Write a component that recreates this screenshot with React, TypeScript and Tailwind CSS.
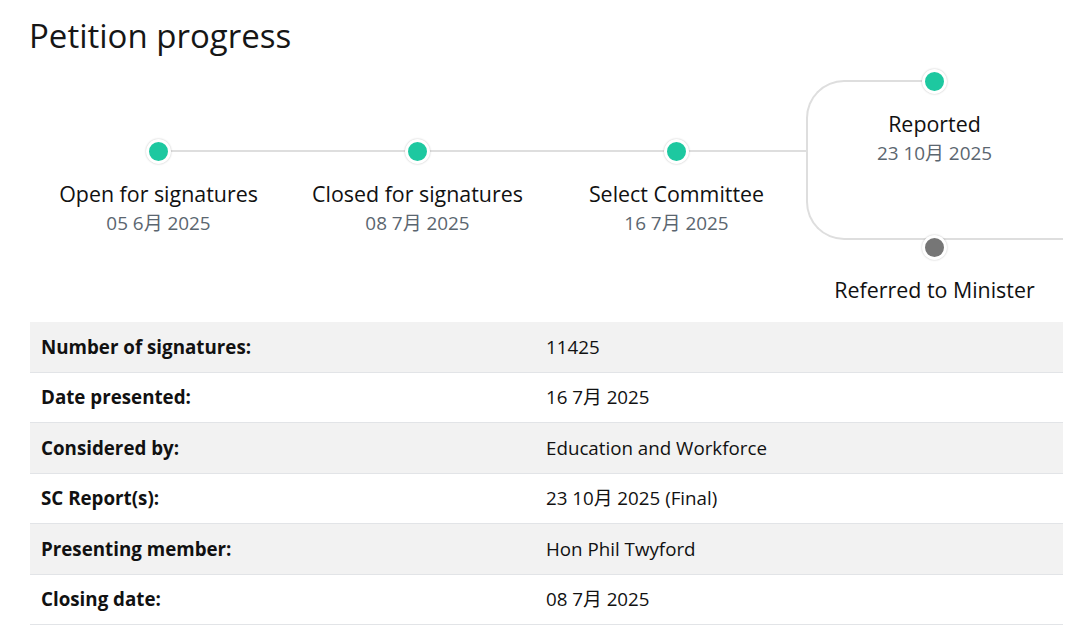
const font = { fontFamily: '"Open Sans", "Noto Sans CJK SC", sans-serif' };

type Stage = { title: string; date: string; first?: boolean };

const stages: Stage[] = [
  { title: "Open for signatures", date: "05 6月 2025", first: true },
  { title: "Closed for signatures", date: "08 7月 2025" },
  { title: "Select Committee", date: "16 7月 2025" },
];

const details: [string, string][] = [
  ["Number of signatures:", "11425"],
  ["Date presented:", "16 7月 2025"],
  ["Considered by:", "Education and Workforce"],
  ["SC Report(s):", "23 10月 2025 (Final)"],
  ["Presenting member:", "Hon Phil Twyford"],
  ["Closing date:", "08 7月 2025"],
];

function Dot({ done = true }: { done?: boolean }) {
  return (
    <span
      className={`relative z-10 block h-[25px] w-[25px] rounded-full border-[3px] border-white shadow-[0_0_2px_rgba(0,0,0,0.25)] ${
        done ? "bg-[#1dc8a0]" : "bg-[#767676]"
      }`}
    />
  );
}

function StageColumn({ stage }: { stage: Stage }) {
  return (
    <div className="flex flex-col items-center pt-[79px]">
      <div className="relative flex w-full justify-center">
        <span
          className={`absolute top-[11px] h-[2px] bg-[#dedede] ${
            stage.first ? "left-1/2 right-0" : "left-0 right-0"
          }`}
        />
        <Dot />
      </div>
      <div className="mt-[16px] whitespace-nowrap text-[21.4px] leading-[28px] text-[#111]">{stage.title}</div>
      <div className="mt-[2px] text-[18.9px] leading-[26px] text-[#5b6670]">{stage.date}</div>
    </div>
  );
}

// last stage branches: the reported node sits on a rounded bracket above the line
function BranchColumn() {
  return (
    <div className="relative h-[262px]">
      <div className="absolute left-0 top-[20px] h-[160px] w-[129px] rounded-l-[38px] border-2 border-r-0 border-[#dedede]" />
      <div className="absolute left-[128px] right-[2px] top-[178px] h-[2px] bg-[#dedede]" />
      <div className="absolute left-[116px] top-[9px]">
        <Dot />
      </div>
      <div className="absolute left-[116px] top-[175px]">
        <Dot done={false} />
      </div>
      <div className="absolute left-0 top-[50px] w-[257px] text-center">
        <div className="text-[21.4px] leading-[28px] text-[#111]">Reported</div>
        <div className="mt-[2px] text-[18.9px] leading-[26px] text-[#5b6670]">23 10月 2025</div>
      </div>
      <div className="absolute left-0 top-[216px] w-[257px] whitespace-nowrap text-center text-[21.4px] leading-[28px] text-[#111]">
        Referred to Minister
      </div>
    </div>
  );
}

export default function App() {
  return (
    <div className="min-h-screen bg-white px-[29px]" style={font}>
      <h1 className="pt-[14px] text-[33px] leading-[44px] font-normal text-[#161616]">Petition progress</h1>

      <div className="mt-[2px] grid w-[1036px] grid-cols-4">
        {stages.map((s) => (
          <StageColumn key={s.title} stage={s} />
        ))}
        <BranchColumn />
      </div>

      <div className="ml-[1px] w-[1033px]">
        {details.map(([label, value], i) => (
          <div
            key={label}
            className={`grid h-[50.5px] grid-cols-[505px_1fr] items-center border-b border-[#e2e4e7] text-[18.75px] text-[#111] ${
              i % 2 === 0 ? "bg-[#f2f2f2]" : "bg-white"
            }`}
          >
            <div className="pl-[11px] font-bold">{label}</div>
            <div className="pl-[11px]">{value}</div>
          </div>
        ))}
      </div>
    </div>
  );
}
